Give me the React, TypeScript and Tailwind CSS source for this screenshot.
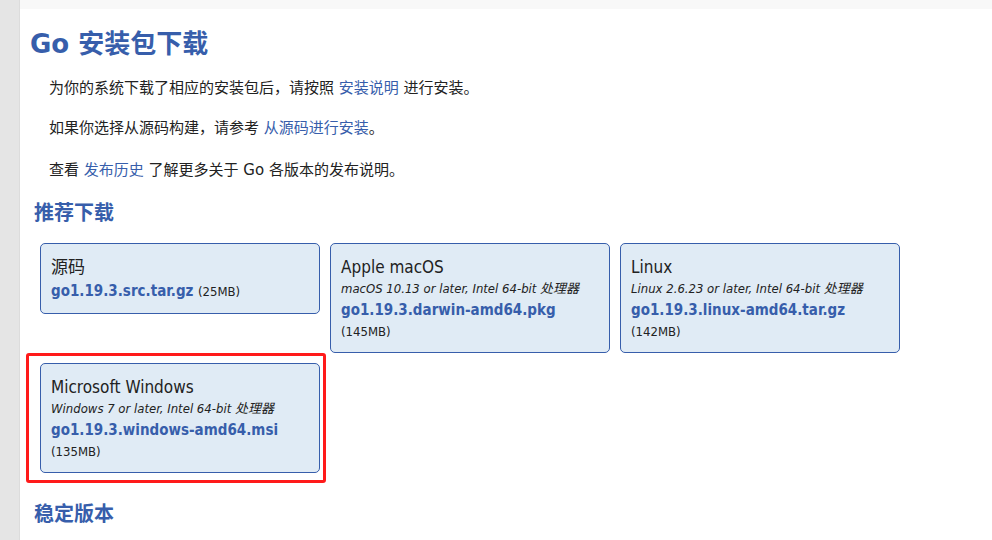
import React from "react";

const F = { fontFamily: '"DejaVu Sans", "Noto Sans CJK SC", sans-serif' };
const FC = { fontFamily: '"DejaVu Sans Condensed", "DejaVu Sans", "Noto Sans CJK SC", sans-serif' };

type Card = { title: string; desc?: string; file: string; size: string; inline?: boolean; mark?: boolean };

const cards: Card[] = [
  { title: "源码", file: "go1.19.3.src.tar.gz", size: "(25MB)", inline: true },
  { title: "Apple macOS", desc: "macOS 10.13 or later, Intel 64-bit 处理器", file: "go1.19.3.darwin-amd64.pkg", size: "(145MB)" },
  { title: "Linux", desc: "Linux 2.6.23 or later, Intel 64-bit 处理器", file: "go1.19.3.linux-amd64.tar.gz", size: "(142MB)" },
  { title: "Microsoft Windows", desc: "Windows 7 or later, Intel 64-bit 处理器", file: "go1.19.3.windows-amd64.msi", size: "(135MB)", mark: true },
];

function DlCard({ c }: { c: Card }) {
  return (
    <div className="relative w-[280px]" style={FC}>
      {c.mark && (
        <div className="absolute left-[-14px] top-[-10px] right-[-6px] bottom-[-10px] border-[3px] border-[#ff1a1a] rounded-[3px] pointer-events-none" />
      )}
      <div className="relative bg-[#e0ebf5] border border-[#375eab] rounded-[5px] px-[10px] pt-[12px] pb-[10px] text-[#222]">
        <div className="text-[17px] leading-[22px]">{c.title}</div>
        {c.desc && <div className="italic text-[13px] leading-[20px] mt-[1px]">{c.desc}</div>}
        {c.inline ? (
          <div className="leading-[22px] mt-[2px]">
            <span className="font-bold text-[15px] text-[#375eab]">{c.file}</span>{" "}
            <span className="text-[13px]">{c.size}</span>
          </div>
        ) : (
          <>
            <div className="font-bold text-[15px] leading-[22px] text-[#375eab]">{c.file}</div>
            <div className="text-[13px] leading-[20px] mt-[1px]">{c.size}</div>
          </>
        )}
      </div>
    </div>
  );
}

export default function App() {
  return (
    <div className="flex w-[992px] h-[540px] overflow-hidden bg-white" style={F}>
      <div className="w-[20px] h-full bg-[#e5e5e5] border-r border-[#dcdcdc]" />
      <div className="flex-1 flex flex-col">
        <div className="h-[9px] bg-[#f8f8f8]" />
        <div className="pl-[10px]">
          <h1 className="mt-[18px] text-[26px] leading-[34px] font-bold text-[#375eab]">Go 安装包下载</h1>
          <div className="pl-[19px] text-[15px] text-[#222] leading-[20px]">
            <p className="mt-[17px]">
              为你的系统下载了相应的安装包后，请按照 <span className="text-[#375eab]">安装说明</span> 进行安装。
            </p>
            <p className="mt-[20px]">
              如果你选择从源码构建，请参考 <span className="text-[#375eab]">从源码进行安装</span>。
            </p>
            <p className="mt-[22px]">
              查看 <span className="text-[#375eab]">发布历史</span> 了解更多关于 Go 各版本的发布说明。
            </p>
          </div>
          <h2 className="pl-[4px] mt-[20px] text-[20px] leading-[26px] font-bold text-[#375eab]">推荐下载</h2>
          <div className="pl-[10px] mt-[17px] flex flex-wrap items-start gap-[10px] w-[880px]">
            {cards.map((c) => (
              <DlCard key={c.file} c={c} />
            ))}
          </div>
          <h2 className="pl-[4px] mt-[28px] text-[20px] leading-[26px] font-bold text-[#375eab]">稳定版本</h2>
        </div>
      </div>
    </div>
  );
}
